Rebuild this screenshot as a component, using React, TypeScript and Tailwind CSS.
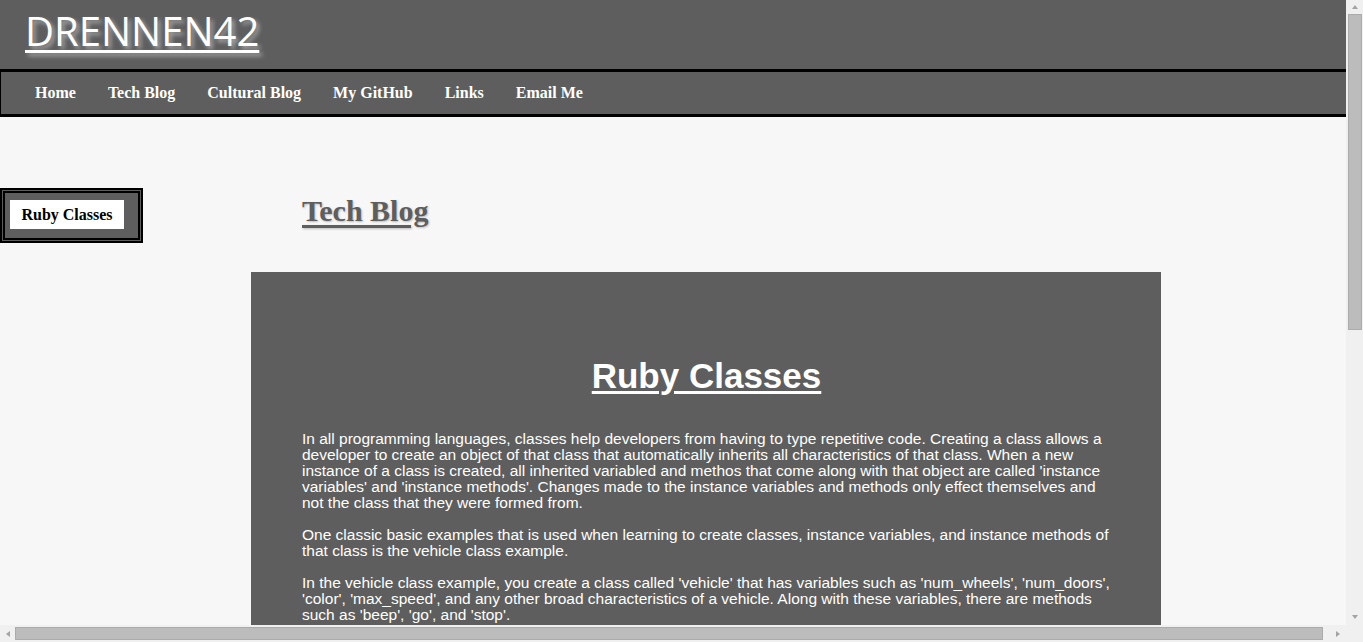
import React from "react";

const navItems = ["Home", "Tech Blog", "Cultural Blog", "My GitHub", "Links", "Email Me"];

function Arrow({ dir }: { dir: "up" | "down" | "left" | "right" }) {
  const pts: Record<string, string> = {
    up: "1,6 4,2 7,6",
    down: "1,2 4,6 7,2",
    left: "6,1 2,4 6,7",
    right: "2,1 6,4 2,7",
  };
  return (
    <svg width="8" height="8" viewBox="0 0 8 8" className="block">
      <polygon points={pts[dir]} fill="#a3a3a3" />
    </svg>
  );
}

export default function App() {
  return (
    <div className="w-[1363px] h-[642px] overflow-hidden grid grid-cols-[1346px_17px] grid-rows-[625px_17px] bg-[#f0f0f0]">
      {/* page viewport */}
      <div className="overflow-hidden bg-[#f7f7f7]">
        <header className="h-[69px] bg-[#5e5e5e] pl-[25px] pt-[6px]">
          <a
            href="#"
            className="inline-block text-white text-[40px] leading-[50px] font-medium underline decoration-[3px] underline-offset-[4px] [text-shadow:3px_3px_4px_#a8a8a8]"
            style={{ fontFamily: '"Open Sans", "DejaVu Sans", sans-serif' }}
          >
            DRENNEN42
          </a>
        </header>
        <nav
          className="h-[48px] bg-[#5e5e5e] border-y-[3px] border-l border-black flex items-center pl-[34px] gap-[32px]"
          style={{ fontFamily: '"Liberation Serif", "Times New Roman", serif' }}
        >
          {navItems.map((n) => (
            <a key={n} href="#" className="text-white font-bold text-[16px] leading-[20px]">
              {n}
            </a>
          ))}
        </nav>
        <div className="flex items-start">
          <aside className="mt-[71px] w-[143px] h-[55px] bg-[#5e5e5e] border-[5px] border-double border-black pl-[5px] pt-[7px]">
            <div
              className="w-[114px] h-[29px] bg-white flex items-center justify-center text-black font-bold text-[16px]"
              style={{ fontFamily: '"Liberation Serif", "Times New Roman", serif' }}
            >
              Ruby Classes
            </div>
          </aside>
          <main className="ml-[108px] pt-[77px] w-[910px]">
            <h2
              className="pl-[51px] h-[34px] text-[30px] leading-[34px] font-bold text-[#5e5e5e] underline decoration-[3px] underline-offset-[4px] [text-shadow:1px_1px_2px_#bbbbbb]"
              style={{ fontFamily: '"Liberation Serif", "Times New Roman", serif' }}
            >
              Tech Blog
            </h2>
            <section
              className="mt-[44px] h-[400px] bg-[#5e5e5e] pt-[83px] pl-[51px] pr-[46px] text-white"
              style={{ fontFamily: '"Liberation Sans", Arial, sans-serif' }}
            >
              <h1 className="text-center pr-[4px] text-[35px] leading-[41px] font-bold underline decoration-[3px] underline-offset-[3px]">
                Ruby Classes
              </h1>
              <div className="mt-[35px] text-[15.5px] leading-[16px]">
                <p className="mb-[16px]">
                  In all programming languages, classes help developers from having to type repetitive code. Creating a class allows a developer to create an object of that class that automatically inherits all characteristics of that class. When a new instance of a class is created, all inherited variabled and methos that come along with that object are called 'instance variables' and 'instance methods'. Changes made to the instance variables and methods only effect themselves and not the class that they were formed from.
                </p>
                <p className="mb-[16px]">
                  One classic basic examples that is used when learning to create classes, instance variables, and instance methods of that class is the vehicle class example.
                </p>
                <p>
                  In the vehicle class example, you create a class called 'vehicle' that has variables such as 'num_wheels', 'num_doors', 'color', 'max_speed', and any other broad characteristics of a vehicle. Along with these variables, there are methods such as 'beep', 'go', and 'stop'.
                </p>
              </div>
            </section>
          </main>
        </div>
      </div>

      {/* vertical scrollbar */}
      <div className="bg-[#f0f0f0] flex flex-col items-center">
        <div className="h-[14px] flex items-center justify-center">
          <Arrow dir="up" />
        </div>
        <div className="w-[14px] h-[316px] bg-[#bcbcbc] border border-[#ababab]" />
        <div className="flex-1" />
        <div className="h-[17px] flex items-center justify-center">
          <Arrow dir="down" />
        </div>
      </div>

      {/* horizontal scrollbar */}
      <div className="bg-[#f0f0f0] flex items-center">
        <div className="w-[15px] flex items-center justify-center">
          <Arrow dir="left" />
        </div>
        <div className="w-[1308px] h-[13px] bg-[#bcbcbc] border border-[#ababab]" />
        <div className="flex-1 flex items-center justify-end pr-[4px]">
          <Arrow dir="right" />
        </div>
      </div>
      <div className="bg-[#f0f0f0]" />
    </div>
  );
}
